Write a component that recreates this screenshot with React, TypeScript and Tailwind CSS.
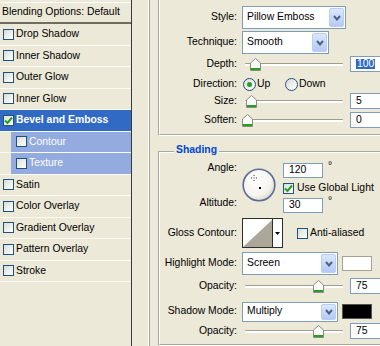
import React from "react";

function Box({ checked }: { checked?: boolean }) {
  return (
    <span className="w-[11px] h-[11px] shrink-0 border border-[#1c5180] bg-linear-to-br from-[#dcdcd5] to-white flex items-center justify-center">
      {checked && (
        <svg width="9" height="9" viewBox="0 0 9 9">
          <path d="M1 4.5 L3.5 7 L8 1.5" stroke="#21a121" strokeWidth="2" fill="none" />
        </svg>
      )}
    </span>
  );
}

function Radio({ on }: { on?: boolean }) {
  return (
    <span className="w-[13px] h-[13px] shrink-0 rounded-full border border-[#1c5180] bg-linear-to-br from-[#dcdcd5] to-white flex items-center justify-center">
      {on && <span className="w-[5px] h-[5px] rounded-full bg-[#21a121]" />}
    </span>
  );
}

function Select({ value, className }: { value: string; className: string }) {
  return (
    <div className={`flex bg-white border border-[#7f9db9] p-[1px] ${className}`}>
      <span className="flex-1 flex items-center pl-[3px]">{value}</span>
      <span className="w-[15px] rounded-[2px] border border-[#b9cdf7] bg-linear-to-b from-[#dce7fd] to-[#b4c9f4] flex items-center justify-center">
        <svg width="8" height="6" viewBox="0 0 8 6">
          <path d="M1 1 L4 4.5 L7 1" stroke="#4d6185" strokeWidth="2" fill="none" />
        </svg>
      </span>
    </div>
  );
}

function Num({ v, sel }: { v: string; sel?: boolean }) {
  return (
    <div className="ml-[4px] w-[40px] h-[16px] shrink-0 bg-white border border-[#7f9db9] flex items-center pl-[5px]">
      {sel ? <span className="bg-[#316ac5] text-white px-[1px]">{v}</span> : v}
    </div>
  );
}

function Slider({ pos }: { pos: number }) {
  return (
    <div className="relative w-[104px] h-full shrink-0">
      <div className="absolute left-[3px] right-[3px] top-[7px] h-[3px] rounded-[1px] bg-white border-t border-[#a19e8f]" />
      <svg className="absolute top-[2px]" style={{ left: pos }} width="11" height="13" viewBox="0 0 11 13">
        <path d="M0.5 12.5 V5 L5.5 0.5 L10.5 5 V12.5 Z" fill="#fdfdfb" stroke="#8c8a7c" />
        <path d="M1 11 H10" stroke="#21a121" strokeWidth="2" />
      </svg>
    </div>
  );
}

function Label({ children }: { children: React.ReactNode }) {
  return <div className="w-[77px] shrink-0 text-right">{children}</div>;
}

const items = [
  { name: "Drop Shadow" },
  { name: "Inner Shadow" },
  { name: "Outer Glow" },
  { name: "Inner Glow" },
  { name: "Bevel and Emboss", on: true },
  { name: "Contour", sub: true },
  { name: "Texture", sub: true },
  { name: "Satin" },
  { name: "Color Overlay" },
  { name: "Gradient Overlay" },
  { name: "Pattern Overlay" },
  { name: "Stroke" },
];

export default function App() {
  return (
    <div className="w-[380px] h-[346px] bg-[#ece9d8] flex overflow-hidden font-['Liberation_Sans',Arial,sans-serif] text-[10.4px] leading-none text-black">
      {/* styles list */}
      <div className="w-[132px] shrink-0 h-full border-r border-[#3a3a36]">
        <div className="h-[3px] border-b border-white" />
        <div className="h-[21px] flex items-center pl-[2px] border-b-2 border-[#6f6d62]">
          Blending Options: Default
        </div>
        {items.map((it) => (
          <div key={it.name} className={`h-[21.5px] border-b border-[#fbfaf5] ${it.sub ? "pl-[11px]" : ""}`}>
            <div
              className={`h-full flex items-center gap-[2px] ${
                it.on ? "bg-[#316ac5] text-white font-bold pl-[3px]" : it.sub ? "bg-[#93abde] text-white pl-[5px]" : "pl-[3px]"
              }`}
            >
              <Box checked={it.on} />
              <span>{it.name}</span>
            </div>
          </div>
        ))}
      </div>

      {/* options */}
      <div className="flex-1 h-full pl-[16px] overflow-hidden">
        <div className="h-full border-l border-white">
          <div className="h-full border-l border-[#aca899] pl-[8px]">
            {/* structure */}
            <div className="w-[260px] border-l border-[#aca899] border-b border-b-white">
              <div className="h-[135px] pt-[6px] border-l border-white border-b border-b-[#aca899]">
                <div className="flex items-center h-[23px]">
                  <Label>Style:</Label>
                  <Select value="Pillow Emboss" className="ml-[5px] w-[104px] h-[23px]" />
                </div>
                <div className="flex items-center h-[23px] mt-[2px]">
                  <Label>Technique:</Label>
                  <Select value="Smooth" className="ml-[5px] w-[87px] h-[23px]" />
                </div>
                <div className="flex items-center h-[16px] mt-[2px]">
                  <Label>Depth:</Label>
                  <div className="ml-[5px] h-full flex items-center">
                    <Slider pos={8} />
                    <Num v="100" sel />
                  </div>
                </div>
                <div className="flex items-center h-[16px] mt-[4px]">
                  <Label>Direction:</Label>
                  <div className="ml-[6px] w-[42px] flex items-center gap-[1px]">
                    <Radio on />
                    <span>Up</span>
                  </div>
                  <div className="flex items-center gap-[1px]">
                    <Radio />
                    <span>Down</span>
                  </div>
                </div>
                <div className="flex items-center h-[16px] mt-[1px]">
                  <Label>Size:</Label>
                  <div className="ml-[5px] h-full flex items-center">
                    <Slider pos={4} />
                    <Num v="5" />
                  </div>
                </div>
                <div className="flex items-center h-[16px] mt-[3px]">
                  <Label>Soften:</Label>
                  <div className="ml-[5px] h-full flex items-center">
                    <Slider pos={0} />
                    <Num v="0" />
                  </div>
                </div>
              </div>
            </div>

            {/* shading */}
            <div className="relative mt-[15px] w-[260px] border-l border-t border-[#aca899] border-b border-b-white">
              <span className="absolute -top-[7px] left-[15px] px-[2px] bg-[#ece9d8] text-[#0046d5] font-bold">Shading</span>
              <div className="border-l border-t border-white border-b border-b-[#aca899] pb-[5px]">
                <div className="flex mt-[7px] h-[52px]">
                  <div className="w-[77px] shrink-0 text-right">
                    <div className="h-[16px] flex items-center justify-end">Angle:</div>
                    <div className="h-[16px] mt-[19px] flex items-center justify-end">Altitude:</div>
                  </div>
                  <svg className="ml-[5px] mt-[8px]" width="34" height="34" viewBox="0 0 34 34">
                    <defs>
                      <radialGradient id="dial" cx="0.4" cy="0.35" r="0.7">
                        <stop offset="0" stopColor="#ffffff" />
                        <stop offset="0.7" stopColor="#f4f3ee" />
                        <stop offset="1" stopColor="#d4d1c4" />
                      </radialGradient>
                    </defs>
                    <circle cx="17" cy="17" r="15.8" fill="url(#dial)" stroke="#5b6b93" strokeWidth="1.6" />
                    <path d="M12 7 V8 M12 12 V13 M9 10 H10 M14 10 H15" stroke="#333" strokeWidth="1" />
                    <rect x="11.5" y="9.5" width="1" height="1" fill="#333" />
                    <rect x="17" y="19" width="2" height="2" fill="#000" />
                  </svg>
                  <div className="ml-[7px]">
                    <div className="flex items-start mt-[3px]">
                      <div className="w-[40px] h-[15px] bg-white border border-[#7f9db9] flex items-center pl-[5px]">120</div>
                      <span className="ml-[5px] -mt-[2px]">°</span>
                    </div>
                    <div className="flex items-center gap-[3px] mt-[4px] h-[13px]">
                      <Box checked />
                      <span>Use Global Light</span>
                    </div>
                    <div className="flex items-start mt-[3px]">
                      <div className="w-[40px] h-[15px] bg-white border border-[#7f9db9] flex items-center pl-[5px]">30</div>
                      <span className="ml-[5px] -mt-[2px]">°</span>
                    </div>
                  </div>
                </div>

                <div className="flex items-center h-[30px] mt-[6px]">
                  <Label>Gloss Contour:</Label>
                  <div className="ml-[5px] w-[41px] h-[30px] border border-[#2e2e2b] flex bg-white">
                    <svg width="29" height="28" viewBox="0 0 29 28">
                      <path d="M0 28 L29 1 L29 28 Z" fill="#aca899" />
                    </svg>
                    <div className="flex-1 border-l border-[#2e2e2b] flex items-center justify-center">
                      <svg width="5" height="3" viewBox="0 0 5 3">
                        <path d="M0 0 H5 L2.5 3 Z" fill="#000" />
                      </svg>
                    </div>
                  </div>
                  <div className="ml-[14px] flex items-center gap-[2px]">
                    <Box />
                    <span>Anti-aliased</span>
                  </div>
                </div>

                <div className="flex items-center h-[23px] mt-[4px]">
                  <Label>Highlight Mode:</Label>
                  <Select value="Screen" className="ml-[5px] w-[96px] h-[23px]" />
                  <div className="ml-[4px] w-[30px] h-[15px] bg-white border border-[#a5a294]" />
                </div>
                <div className="flex items-center h-[16px] mt-[3px]">
                  <Label>Opacity:</Label>
                  <div className="ml-[5px] h-full flex items-center">
                    <Slider pos={71} />
                    <Num v="75" />
                  </div>
                </div>
                <div className="flex items-center h-[19px] mt-[8px]">
                  <Label>Shadow Mode:</Label>
                  <Select value="Multiply" className="ml-[5px] w-[96px] h-[20px]" />
                  <div className="ml-[4px] w-[30px] h-[15px] bg-black border border-[#55534b]" />
                </div>
                <div className="flex items-center h-[16px] mt-[2px]">
                  <Label>Opacity:</Label>
                  <div className="ml-[5px] h-full flex items-center">
                    <Slider pos={71} />
                    <Num v="75" />
                  </div>
                </div>
              </div>
            </div>
          </div>
        </div>
      </div>
    </div>
  );
}
